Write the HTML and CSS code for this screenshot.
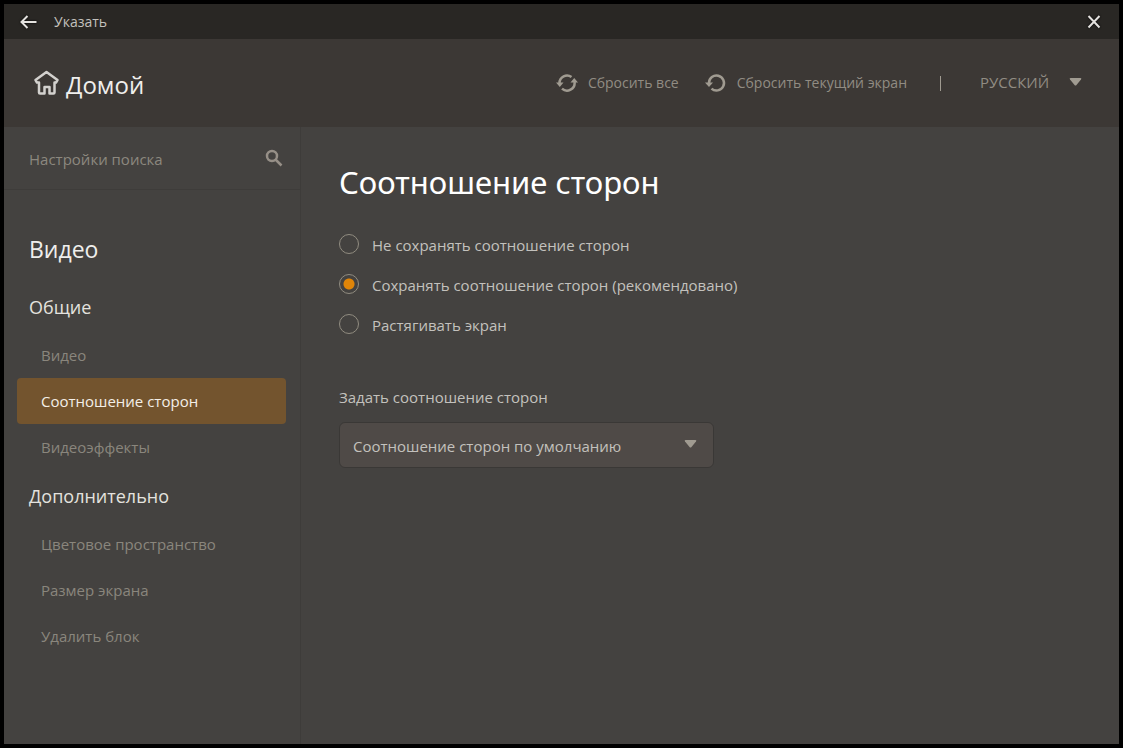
FILE: index.html
```html
<!DOCTYPE html>
<html lang="ru">
<head>
<meta charset="utf-8">
<meta name="viewport" content="width=device-width, initial-scale=1">
<title>Указать</title>
<link rel="stylesheet" href="styles.css">
</head>
<body>
<div class="window">
  <div class="titlebar">
    <button class="icon-button" type="button" aria-label="Назад">
      <svg class="outlined" width="22" height="22" viewBox="0 0 22 22"><path d="M9.500 5 3.500 11l6 6M4 11H18.500"/></svg>
    </button>
    <span class="titlebar-text">Указать</span>
    <button class="icon-button" type="button" aria-label="Закрыть">
      <svg class="outlined" width="22" height="22" viewBox="0 0 22 22"><path d="M5.500 5 16.500 16.500M16.500 5 5.500 16.500"/></svg>
    </button>
  </div>
  <header class="header">
    <a class="home" href="#">
      <svg class="home-icon" width="28" height="28" viewBox="0 0 28 28"><path d="M3.500 11 14.500 3l11 8-1.500 2.500h-1.500V23.500Q22.500 24.500 21.500 24.500H17.500V18h-5v6.500H8Q7 24.500 7 23.500V13.500H5z"/></svg>
      <span class="home-text">Домой</span>
    </a>
    <div class="actions">
      <button class="action" type="button">
        <svg width="22" height="20" viewBox="0 0 22 20"><path class="arc" d="M3.500 10A7.500 7.500 0 0 1 15.500 4M18.500 9A7.500 7.500 0 0 1 6 15.600"/><path class="tip" d="M0 9.500h7.500L3.800 14zM14.500 9.500h7.500L18.200 5z"/></svg>
        <span>Сбросить все</span>
      </button>
      <button class="action" type="button">
        <svg width="22" height="20" viewBox="0 0 22 20"><path class="arc" d="M4 10A7.500 7.500 0 1 1 6.500 15.600"/><path class="tip" d="M0 9.500h8L4 14z"/></svg>
        <span>Сбросить текущий экран</span>
      </button>
      <span class="divider"></span>
      <div class="select language">
        <select aria-label="Язык"><option>РУССКИЙ</option></select>
        <svg class="caret" width="13" height="8" viewBox="0 0 13 8"><path d="M1.500 0h10q1.500 0 .5 1.500L7.500 7q-1 1-2 0L1 1.500Q0 0 1.500 0z"/></svg>
      </div>
    </div>
  </header>
  <div class="body">
    <aside class="sidebar">
      <form class="search">
        <input type="text" placeholder="Настройки поиска" aria-label="Настройки поиска">
        <button class="icon-button" type="button" aria-label="Найти">
          <svg class="search-icon" width="18" height="18" viewBox="0 0 18 18"><circle cx="7" cy="7" r="5"/><path d="M10.500 10.500 16.500 16.500"/></svg>
        </button>
      </form>
      <nav class="nav">
        <h2 class="nav-title">Видео</h2>
        <h3 class="nav-group">Общие</h3>
        <a class="nav-item" href="#">Видео</a>
        <a class="nav-item active" href="#" aria-current="page">Соотношение сторон</a>
        <a class="nav-item" href="#">Видеоэффекты</a>
        <h3 class="nav-group">Дополнительно</h3>
        <a class="nav-item" href="#">Цветовое пространство</a>
        <a class="nav-item" href="#">Размер экрана</a>
        <a class="nav-item" href="#">Удалить блок</a>
      </nav>
    </aside>
    <main class="content">
      <h1 class="page-title">Соотношение сторон</h1>
      <div class="options" role="radiogroup" aria-label="Соотношение сторон">
        <label class="option"><input type="radio" name="ratio"><span>Не сохранять соотношение сторон</span></label>
        <label class="option"><input type="radio" name="ratio" checked><span>Сохранять соотношение сторон (рекомендовано)</span></label>
        <label class="option"><input type="radio" name="ratio"><span>Растягивать экран</span></label>
      </div>
      <label class="field-label" for="aspect">Задать соотношение сторон</label>
      <div class="select aspect">
        <select id="aspect"><option>Соотношение сторон по умолчанию</option></select>
        <svg class="caret" width="13" height="8" viewBox="0 0 13 8"><path d="M1.500 0h10q1.500 0 .5 1.500L7.500 7q-1 1-2 0L1 1.500Q0 0 1.500 0z"/></svg>
      </div>
    </main>
  </div>
</div>
</body>
</html>
```
FILE: styles.css
```css
* {
  box-sizing: border-box;
}

body {
  margin: 0;
  background: #000;
  color: #c3c1bd;
  font: 15px/20px "Open Sans", "Noto Sans", sans-serif;
}

h1, h2, h3 {
  margin: 0;
  font-weight: 400;
}

a {
  color: inherit;
  text-decoration: none;
}

button, input, select {
  margin: 0;
  padding: 0;
  border: 0;
  background: none;
  color: inherit;
  font: inherit;
}

svg {
  display: block;
  flex: none;
}

.window {
  display: flex;
  flex-direction: column;
  min-height: 100vh;
  border: 4px solid #000;
  background: #444240;
}

.titlebar {
  display: flex;
  align-items: center;
  gap: 14px;
  height: 35px;
  padding: 0 14px;
  background: #292724;
  font-size: 14px;
}

.titlebar-text {
  flex: 1;
}

.outlined {
  fill: none;
  stroke: #e4e2df;
  stroke-width: 2;
  filter: drop-shadow(0 0 1px #000);
}

.header {
  display: flex;
  align-items: center;
  justify-content: space-between;
  height: 88px;
  padding: 0 37px 0 28px;
  background: #3c3835;
}

.home {
  display: flex;
  align-items: center;
  gap: 6px;
  color: #f0efed;
  font-size: 24px;
  line-height: 32px;
}

.home-text {
  padding-top: 4px;
}

.home-icon {
  fill: none;
  stroke: #d3d1ce;
  stroke-width: 2.5;
  stroke-linejoin: round;
}

.actions {
  display: flex;
  align-items: center;
  color: #918c83;
}

.action {
  display: flex;
  align-items: center;
  gap: 10px;
  margin-right: 26px;
  font-size: 14px;
}

.arc {
  fill: none;
  stroke: #a09b91;
  stroke-width: 2.5;
}

.tip, .caret {
  fill: #a09b91;
}

.divider {
  width: 1px;
  height: 15px;
  margin: 0 39px 0 7px;
  background: #a09b91;
}

.select {
  position: relative;
}

.select select {
  width: 100%;
  appearance: none;
}

.caret {
  position: absolute;
  top: 50%;
  right: 0;
  margin-top: -5px;
  pointer-events: none;
}

.language select {
  padding: 0 32px 2px 0;
}

.body {
  display: flex;
  flex: 1;
}

.sidebar {
  flex: none;
  width: 297px;
  border-right: 1px solid #3e3c3a;
}

.search {
  display: flex;
  align-items: center;
  height: 63px;
  padding: 0 17px 0 25px;
  border-bottom: 1px solid #3e3c3a;
}

.search input {
  flex: 1;
  min-width: 0;
  padding-top: 2px;
  outline: 0;
}

.search input::placeholder {
  color: #8c887f;
  opacity: 1;
}

.search-icon {
  fill: none;
  stroke: #968f87;
  stroke-width: 2.5;
}

.nav {
  padding: 26px 14px 26px 13px;
}

.nav-title {
  padding: 17px 12px 17px;
  color: #efeeec;
  font-size: 23px;
  line-height: 32px;
}

.nav-group {
  padding: 13px 12px;
  color: #e4e2df;
  font-size: 18px;
  line-height: 24px;
}

.nav-item + .nav-group {
  padding-top: 14px;
}

.nav-item {
  display: block;
  padding: 13px 24px;
  border-radius: 4px;
  color: #8a867d;
}

.nav-item.active {
  background: #73542e;
  color: #f4efe8;
}

.content {
  flex: 1;
  padding: 35px 38px;
}

.page-title {
  color: #fff;
  font-family: "Noto Sans", sans-serif;
  font-size: 31px;
  line-height: 40px;
}

.options {
  display: grid;
  gap: 19px;
  margin: 32px 0 52px;
}

.option {
  display: flex;
  align-items: flex-start;
  gap: 13px;
}

.option span {
  padding-top: 1px;
}

.option input {
  width: 20px;
  height: 20px;
  border: 1px solid #918c80;
  border-radius: 50%;
  appearance: none;
}

.option input:checked {
  background: radial-gradient(circle, #e08508 5px, transparent 6px);
}

.field-label {
  display: block;
  margin-bottom: 15px;
}

.aspect {
  max-width: 375px;
}

.aspect select {
  height: 46px;
  padding: 1px 40px 0 13px;
  border: 1px solid #3a3836;
  border-radius: 6px;
  background: #4f4a47;
}

.aspect .caret {
  right: 17px;
}
```
